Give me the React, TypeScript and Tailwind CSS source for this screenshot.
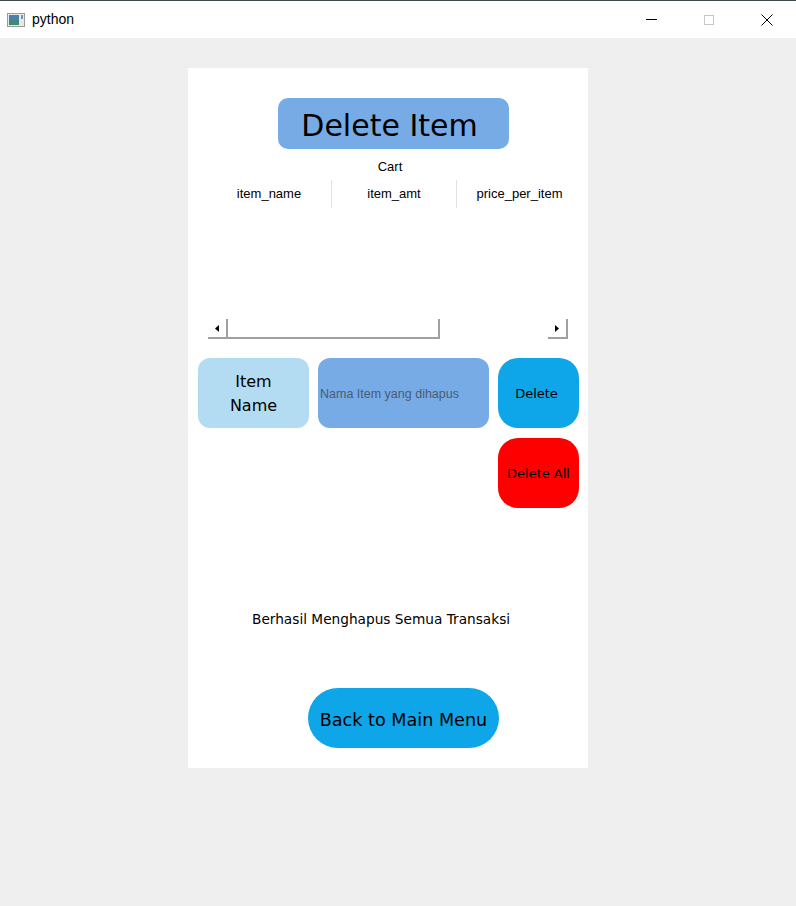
import React from "react";

const mont = { fontFamily: '"DejaVu Sans", "Open Sans", sans-serif' };
const sys = { fontFamily: '"Liberation Sans", Arial, sans-serif' };

const TitleBar: React.FC = () => {
  return (
    <div className="h-[38px] bg-white border-t border-[#3a4a4a] flex items-center" style={sys}>
      <svg width="18" height="14" viewBox="0 0 18 14" className="ml-[7px]">
        <rect x="0.5" y="0.5" width="17" height="13" fill="#e8e8e8" stroke="#9a9a9a" />
        <rect x="2" y="2" width="10" height="10" fill="#3c8a7a" />
        <rect x="2" y="2" width="10" height="5" fill="#4a7fb0" />
        <rect x="14" y="2" width="2" height="4" fill="#6a9ac0" />
      </svg>
      <span className="ml-[7px] text-[14px] text-black">python</span>
      <div className="ml-auto flex items-center">
        <div className="w-[58px] flex justify-center">
          <div className="w-[11px] h-px bg-black" />
        </div>
        <div className="w-[58px] flex justify-center">
          <div className="w-[10px] h-[10px] border border-[#c8c8c8]" />
        </div>
        <div className="w-[58px] flex justify-center">
          <svg width="12" height="12" viewBox="0 0 12 12">
            <path d="M0.5 0.5 L11.5 11.5 M11.5 0.5 L0.5 11.5" stroke="#000" strokeWidth="1" />
          </svg>
        </div>
      </div>
    </div>
  );
};

const ScrollBar: React.FC = () => {
  return (
    <div className="ml-[20px] mt-[111px] w-[360px] h-[20px] flex">
      <div className="w-[20px] h-[20px] border-r-2 border-b-2 border-[#a0a0a0] flex items-center justify-center">
        <svg width="4" height="7" viewBox="0 0 4 7">
          <path d="M4 0 L0 3.5 L4 7 Z" fill="#000" />
        </svg>
      </div>
      <div className="w-[212px] h-[20px] border-r-2 border-b-2 border-[#a0a0a0]" />
      <div className="flex-1" />
      <div className="w-[20px] h-[20px] border-r-2 border-b-2 border-[#a0a0a0] flex items-center justify-center">
        <svg width="4" height="7" viewBox="0 0 4 7">
          <path d="M0 0 L4 3.5 L0 7 Z" fill="#000" />
        </svg>
      </div>
    </div>
  );
};

const App: React.FC = () => {
  return (
    <div className="w-[796px] h-[906px] bg-[#efefef] overflow-hidden">
      <TitleBar />
      <div className="ml-[188px] mt-[30px] w-[400px] h-[700px] bg-white flex flex-col">
        <div
          className="ml-[90px] mt-[30px] w-[231px] h-[51px] bg-[#77abe6] rounded-[10px] flex items-center justify-center pt-[3px] pr-[8px] text-[30px] text-black"
          style={mont}
        >
          Delete Item
        </div>
        <div className="mt-[10px] h-[16px] flex justify-center text-[13px] leading-[16px] text-black ml-[4px]" style={sys}>
          Cart
        </div>
        <div className="ml-[19px] mt-[3px] w-[375px] h-[30px] flex text-[13px] text-black pt-[2px]" style={sys}>
          <div className="w-[125px] flex items-center justify-center border-r border-[#e3e3e3]">item_name</div>
          <div className="w-[125px] flex items-center justify-center border-r border-[#e3e3e3]">item_amt</div>
          <div className="w-[125px] flex items-center justify-center">price_per_item</div>
        </div>
        <ScrollBar />
        <div className="mt-[19px] ml-[10px] flex gap-[9px]">
          <div
            className="w-[111px] h-[70px] bg-[#b3dcf2] rounded-[12px] flex items-center justify-center text-center pt-[2px] text-[16px] leading-[24px] text-black"
            style={mont}
          >
            Item
            <br />
            Name
          </div>
          <div className="w-[171px] h-[70px] bg-[#77abe6] rounded-[12px] flex items-center pl-[2px] pt-[2px] text-[12.5px] text-[#4b5b73]" style={sys}>
            Nama Item yang dihapus
          </div>
          <div className="w-[81px] h-[70px] bg-[#0ea5e9] rounded-[20px] flex items-center justify-center pt-[2px] pr-[4px] text-[13px] text-black" style={mont}>
            Delete
          </div>
        </div>
        <div className="mt-[10px] ml-[310px] w-[81px] h-[70px] bg-[#ff0000] rounded-[20px] flex items-center justify-center pt-[2px] text-[13px] text-black whitespace-nowrap" style={mont}>
          Delete All
        </div>
        <div className="mt-[101px] ml-[64px] h-[20px] flex items-center text-[13.7px] text-black" style={mont}>
          Berhasil Menghapus Semua Transaksi
        </div>
        <div
          className="mt-[59px] ml-[120px] w-[191px] h-[60px] bg-[#0ea5e9] rounded-[30px] flex items-center justify-center pt-[4px] text-[17.6px] text-black"
          style={mont}
        >
          Back to Main Menu
        </div>
      </div>
    </div>
  );
};

export default App;
